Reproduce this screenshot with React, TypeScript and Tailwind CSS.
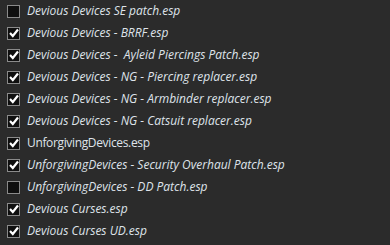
const plugins = [
  { name: 'Devious Devices SE patch.esp', checked: false, italic: true },
  { name: 'Devious Devices - BRRF.esp', checked: true, italic: true },
  { name: 'Devious Devices -  Ayleid Piercings Patch.esp', checked: true, italic: true },
  { name: 'Devious Devices - NG - Piercing replacer.esp', checked: true, italic: true },
  { name: 'Devious Devices - NG - Armbinder replacer.esp', checked: true, italic: true },
  { name: 'Devious Devices - NG - Catsuit replacer.esp', checked: true, italic: true },
  { name: 'UnforgivingDevices.esp', checked: true, italic: false },
  { name: 'UnforgivingDevices - Security Overhaul Patch.esp', checked: true, italic: true },
  { name: 'UnforgivingDevices - DD Patch.esp', checked: false, italic: true },
  { name: 'Devious Curses.esp', checked: true, italic: true },
  { name: 'Devious Curses UD.esp', checked: true, italic: true },
];

const CheckBox = ({ checked }: { checked: boolean }) => (
  <div className="w-[13px] h-[13px] border border-[#8a8a8a] bg-[#0f0f0f] flex items-center justify-center shrink-0">
    {checked && (
      <svg width="10" height="10" viewBox="0 0 10 10">
        <path d="M1 5 L3.8 8 L9 1.5" stroke="#ffffff" strokeWidth="2.2" fill="none" />
      </svg>
    )}
  </div>
);

export default function App() {
  return (
    <div className="w-[390px] h-[245px] bg-[#2b2b2b] overflow-hidden font-['Open_Sans',sans-serif]">
      {plugins.map((p, i) => (
        <div key={i} className="h-[22px] flex items-center pl-[7px]">
          <CheckBox checked={p.checked} />
          <span
            className={`ml-[7px] text-[12px] text-[#dfe3ea] whitespace-pre ${p.italic ? 'italic' : 'tracking-[-0.35px]'}`}
          >
            {p.name}
          </span>
        </div>
      ))}
    </div>
  );
}
